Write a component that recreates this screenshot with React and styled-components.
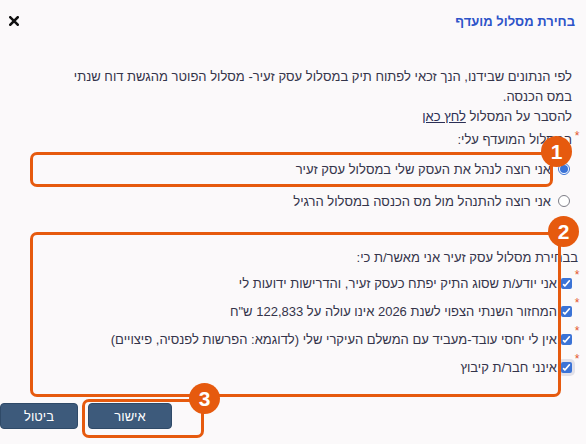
import React from "react";
import styled, { createGlobalStyle, css } from "styled-components";

const GlobalStyle = createGlobalStyle`
  html, body {
    margin: 0;
    padding: 0;
    background: #fbf9fa;
  }
  body {
    font-family: "Liberation Sans", Arial, sans-serif;
    font-size: 13px;
    color: #34344a;
  }
`;

const ORANGE = "#e65a0e";

const Page = styled.div`
  position: relative;
  width: 586px;
  height: 444px;
  overflow: hidden;
  direction: rtl;
  background: #fbf9fa;
`;

const Header = styled.div`
  display: flex;
  align-items: center;
  justify-content: space-between;
  height: 42px;
  padding: 0 11px 0 9px;
`;

const Title = styled.h1`
  margin: 0;
  font-size: 13px;
  font-weight: bold;
  color: #2d54c9;
`;

const CloseButton = styled.button`
  border: 0;
  background: none;
  padding: 0;
  width: 10px;
  height: 10px;
  display: flex;
  cursor: pointer;
`;

const Intro = styled.p`
  margin: 25px 0 0;
  padding: 0 14px 0 55px;
  line-height: 20px;
`;

const Link = styled.a`
  color: #2b2f55;
  text-decoration: underline;
`;

const FieldLabel = styled.div`
  display: flex;
  align-items: center;
  height: 20px;
  margin-top: 3px;
  padding-right: 4px;
  line-height: 20px;
`;

const Required = styled.span`
  width: 10px;
  flex: none;
  color: #e4572e;
  font-size: 12px;
  align-self: flex-start;
  line-height: 12px;
  text-align: center;
`;

const RadioRow = styled.label`
  display: flex;
  align-items: center;
  gap: 7px;
  height: 32px;
  padding-right: 16px;
`;

const RadioList = styled.div`
  margin-top: 3px;
`;

const Radio = styled.span`
  width: 12px;
  height: 12px;
  flex: none;
  box-sizing: border-box;
  border-radius: 50%;
  border: 1px solid ${(p) => (p.$checked ? "#3b73d6" : "#7d7d86")};
  background: #fff;
  display: flex;
  align-items: center;
  justify-content: center;

  ${(p) =>
    p.$checked &&
    css`
      &::after {
        content: "";
        width: 8px;
        height: 8px;
        border-radius: 50%;
        background: #3b73d6;
      }
    `}
`;

const GroupLabel = styled.div`
  margin-top: 31px;
  padding-right: 8px;
  line-height: 20px;
`;

const CheckList = styled.div`
  margin-top: 1px;
`;

const CheckRow = styled.label`
  display: flex;
  align-items: center;
  height: 28px;
  padding-right: 4px;
`;

const Box = styled.span`
  width: 11px;
  height: 11px;
  flex: none;
  margin-left: 4px;
  border-radius: 2px;
  background: #3b73d6;
  display: flex;
  align-items: center;
  justify-content: center;
  ${(p) =>
    p.$focused &&
    css`
      box-shadow: 0 0 0 3px rgba(180, 180, 200, 0.35);
    `}
`;

const Actions = styled.div`
  display: flex;
  justify-content: flex-end;
  gap: 10px;
  margin-top: 22px;
`;

const Button = styled.button`
  height: 26px;
  width: ${(p) => p.$width}px;
  border: 1px solid #2f4a68;
  border-radius: 4px;
  background: #3d5a7b;
  color: #fff;
  font-family: "Liberation Sans", Arial, sans-serif;
  font-size: 13px;
  cursor: pointer;
`;

/* annotation overlay */
const Frame = styled.div`
  position: absolute;
  box-sizing: border-box;
  border: 3px solid ${ORANGE};
  border-radius: 7px;
  pointer-events: none;
`;

const Badge = styled.div`
  position: absolute;
  width: 31px;
  height: 31px;
  margin: -15px 0 0 -15px;
  border-radius: 50%;
  background: ${ORANGE};
  color: #fff;
  font-family: "Liberation Sans", Arial, sans-serif;
  font-weight: bold;
  font-size: 21px;
  display: flex;
  align-items: center;
  justify-content: center;
  pointer-events: none;
`;

const Check = () => (
  <svg width="9" height="9" viewBox="0 0 9 9">
    <path
      d="M1.6 5.6 L2.9 7 L7.4 1.8"
      fill="none"
      stroke="#fff"
      strokeWidth="1.7"
      strokeLinecap="round"
      strokeLinejoin="round"
    />
  </svg>
);

const CloseIcon = () => (
  <svg width="10" height="10" viewBox="0 0 10 10">
    <path d="M1.3 1.3 L8.7 8.7 M8.7 1.3 L1.3 8.7" stroke="#111" strokeWidth="2.6" strokeLinecap="square" />
  </svg>
);

const conditions = [
  "אני יודע/ת שסוג התיק יפתח כעסק זעיר, והדרישות ידועות לי",
  'המחזור השנתי הצפוי לשנת 2026 אינו עולה על 122,833 ש"ח',
  "אין לי יחסי עובד-מעביד עם המשלם העיקרי שלי (לדוגמא: הפרשות לפנסיה, פיצויים)",
  "אינני חבר/ת קיבוץ",
];

const frames = [
  { left: 30, top: 152, width: 523, height: 35 },
  { left: 30, top: 232, width: 531, height: 165 },
  { left: 82, top: 399, width: 122, height: 39 },
];

const badges = [
  { x: 556, y: 151, n: 1 },
  { x: 563, y: 231, n: 2 },
  { x: 204, y: 398, n: 3 },
];

export default function App() {
  return (
    <>
      <GlobalStyle />
      <Page>
        <Header>
          <Title>בחירת מסלול מועדף</Title>
          <CloseButton aria-label="סגירה">
            <CloseIcon />
          </CloseButton>
        </Header>

        <Intro>
          לפי הנתונים שבידנו, הנך זכאי לפתוח תיק במסלול עסק זעיר- מסלול הפוטר
          מהגשת דוח שנתי במס הכנסה.
          <br />
          להסבר על המסלול <Link href="#">לחץ כאן</Link>
        </Intro>

        <FieldLabel>
          <Required>*</Required>
          המסלול המועדף עלי:
        </FieldLabel>

        <RadioList>
          <RadioRow>
            <Radio $checked />
            אני רוצה לנהל את העסק שלי במסלול עסק זעיר
          </RadioRow>
          <RadioRow>
            <Radio />
            אני רוצה להתנהל מול מס הכנסה במסלול הרגיל
          </RadioRow>
        </RadioList>

        <GroupLabel>בבחירת מסלול עסק זעיר אני מאשר/ת כי:</GroupLabel>

        <CheckList>
          {conditions.map((text, i) => (
            <CheckRow key={i}>
              <Required>*</Required>
              <Box $focused={i === conditions.length - 1}>
                <Check />
              </Box>
              {text}
            </CheckRow>
          ))}
        </CheckList>

        <Actions>
          <Button $width={84}>אישור</Button>
          <Button $width={78}>ביטול</Button>
        </Actions>

        {frames.map((f, i) => (
          <Frame key={i} style={f} />
        ))}
        {badges.map((b) => (
          <Badge key={b.n} style={{ left: b.x, top: b.y }}>
            {b.n}
          </Badge>
        ))}
      </Page>
    </>
  );
}
